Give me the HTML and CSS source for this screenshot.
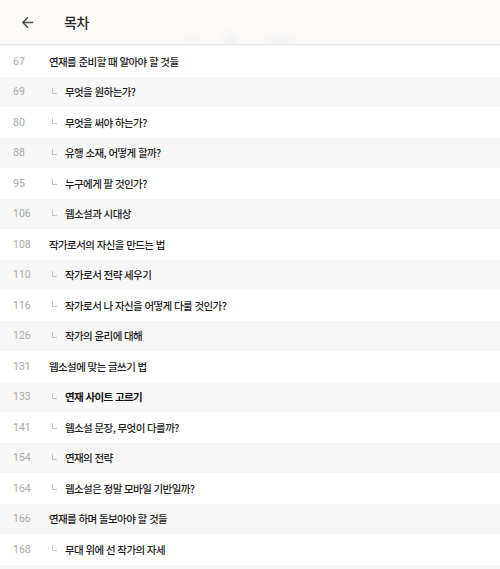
FILE: index.html
```html
<!DOCTYPE html>
<html lang="ko">
<head>
<meta charset="utf-8">
<link rel="stylesheet" href="styles.css">
</head>
<body>
<header class="bar">
  <span class="back">
    <svg width="17" height="17" viewBox="0 0 24 24"><path d="M20 11H7.83l5.59-5.59L12 4l-8 8 8 8 1.41-1.41L7.83 13H20v-2z" fill="#4a4a4a"/></svg>
  </span>
  <span class="title">목차</span>
  <span class="blob b1"></span>
  <span class="blob b2"></span>
  <span class="blob b3"></span>
</header>
<ul class="toc">
  <li class="row"><span class="num">67</span><span class="txt">연재를 준비할 때 알아야 할 것들</span></li>
  <li class="row alt sub"><span class="num">69</span><span class="mark"></span><span class="txt">무엇을 원하는가?</span></li>
  <li class="row sub"><span class="num">80</span><span class="mark"></span><span class="txt">무엇을 써야 하는가?</span></li>
  <li class="row alt sub"><span class="num">88</span><span class="mark"></span><span class="txt">유행 소재, 어떻게 할까?</span></li>
  <li class="row sub"><span class="num">95</span><span class="mark"></span><span class="txt">누구에게 팔 것인가?</span></li>
  <li class="row alt sub"><span class="num">106</span><span class="mark"></span><span class="txt">웹소설과 시대상</span></li>
  <li class="row"><span class="num">108</span><span class="txt">작가로서의 자신을 만드는 법</span></li>
  <li class="row alt sub"><span class="num">110</span><span class="mark"></span><span class="txt">작가로서 전략 세우기</span></li>
  <li class="row sub"><span class="num">116</span><span class="mark"></span><span class="txt">작가로서 나 자신을 어떻게 다룰 것인가?</span></li>
  <li class="row alt sub"><span class="num">126</span><span class="mark"></span><span class="txt">작가의 윤리에 대해</span></li>
  <li class="row"><span class="num">131</span><span class="txt">웹소설에 맞는 글쓰기 법</span></li>
  <li class="row alt sub"><span class="num">133</span><span class="mark"></span><span class="txt strong">연재 사이트 고르기</span></li>
  <li class="row sub"><span class="num">141</span><span class="mark"></span><span class="txt">웹소설 문장, 무엇이 다를까?</span></li>
  <li class="row alt sub"><span class="num">154</span><span class="mark"></span><span class="txt">연재의 전략</span></li>
  <li class="row sub"><span class="num">164</span><span class="mark"></span><span class="txt">웹소설은 정말 모바일 기반일까?</span></li>
  <li class="row alt"><span class="num">166</span><span class="txt">연재를 하며 돌보아야 할 것들</span></li>
  <li class="row sub"><span class="num">168</span><span class="mark"></span><span class="txt">무대 위에 선 작가의 자세</span></li>
  <li class="row alt"></li>
</ul>
</body>
</html>
```
FILE: styles.css
```css
html, body {
  margin: 0;
  padding: 0;
  background: #ffffff;
  overflow: hidden;
}
body {
  width: 500px;
  height: 569px;
  font-family: "Noto Sans CJK KR", "Noto Sans", sans-serif;
}
.bar {
  position: relative;
  height: 44px;
  display: flex;
  align-items: center;
  background: #fcfbf9;
  border-bottom: 1px solid #e9e8e6;
  box-shadow: 0 1px 1px rgba(0,0,0,0.03);
  overflow: hidden;
}
.back {
  display: flex;
  box-sizing: border-box;
  width: 64px;
  padding-left: 19px;
  position: relative;
  z-index: 1;
  flex: none;
}
.title {
  display: block;
  font-size: 14px;
  font-weight: 500;
  color: #262626;
  letter-spacing: -0.3px;
  position: relative;
  z-index: 1;
  flex: none;
}
.blob {
  position: absolute;
  border-radius: 50%;
  filter: blur(4px);
}
.b1 { left: 225px; top: 32px; width: 12px; height: 18px; background: rgba(185,185,215,0.16); }
.b2 { left: 263px; top: 37px; width: 34px; height: 12px; background: rgba(195,195,220,0.14); }
.b3 { left: 178px; top: 37px; width: 28px; height: 10px; background: rgba(210,210,225,0.12); }
.toc {
  list-style: none;
  margin: 0;
  padding: 1px 0 0 0;
}
.row {
  height: 30.5px;
  display: flex;
  align-items: center;
  background: #ffffff;
}
.row.alt {
  background: #f7f7f7;
}
.num {
  width: 36px;
  padding-left: 13px;
  font-family: Roboto, "Noto Sans", sans-serif;
  font-size: 10.5px;
  color: #a8a8a8;
  flex: none;
}
.mark {
  width: 4px;
  height: 5px;
  border-left: 1px solid #c4c4c4;
  border-bottom: 1px solid #c4c4c4;
  margin: 0 8px 0 3px;
  flex: none;
  position: relative;
  top: -1px;
}
.txt {
  font-size: 10.5px;
  font-weight: 500;
  letter-spacing: -0.6px;
  color: #1c1c1c;
}
.txt.strong {
  font-weight: 700;
  color: #111;
}
```
